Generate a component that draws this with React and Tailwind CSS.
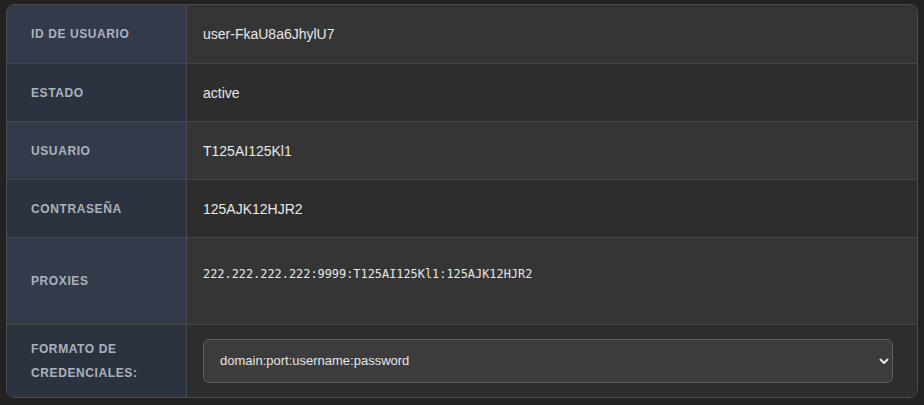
import React from 'react';

const rows = [
	{ label: 'ID de usuario', value: 'user-FkaU8a6JhylU7', h: 'h-[59px]' },
	{ label: 'Estado', value: 'active', h: 'h-[58px]' },
	{ label: 'Usuario', value: 'T125AI125Kl1', h: 'h-[58px]' },
	{ label: 'Contraseña', value: '125AJK12HJR2', h: 'h-[58px]' },
];

const Label = ({ children, odd }) => (
	<div
		className={`flex items-center border-r border-[#454b56] px-6 text-[12px] leading-6 font-bold tracking-[0.05em] text-[#abb2bd] uppercase ${
			odd ? 'bg-[#333b4a]' : 'bg-[#2c3340]'
		}`}
	>
		{children}
	</div>
);

const App = () => {
	return (
		<div className="min-h-screen bg-[#222222] px-1.5 pt-1 font-['Liberation_Sans',Arial,sans-serif]">
			<div className="overflow-hidden rounded-lg border border-[#4b4b4b]">
				{rows.map((row, i) => (
					<div key={row.label} className={`grid grid-cols-[180px_1fr] border-b border-[#464646] ${row.h}`}>
						<Label odd={i % 2 === 0}>{row.label}</Label>
						<div className={`flex items-center px-4 pt-px text-[14px] text-[#e8e8e8] ${i % 2 === 0 ? 'bg-[#353535]' : 'bg-[#2d2d2d]'}`}>
							{row.value}
						</div>
					</div>
				))}

				<div className="grid h-[87px] grid-cols-[180px_1fr] border-b border-[#464646]">
					<Label odd>Proxies</Label>
					<div className="bg-[#353535] px-4 pt-[23px]">
						<code className="font-['DejaVu_Sans_Mono','Liberation_Mono',monospace] text-[11.9px] leading-5 text-[#e8e8e8]">
							222.222.222.222:9999:T125AI125Kl1:125AJK12HJR2
						</code>
					</div>
				</div>

				<div className="grid h-[72px] grid-cols-[180px_1fr]">
					<Label>Formato de credenciales:</Label>
					<div className="bg-[#2d2d2d] pt-[14px] pr-6 pl-4">
						<div className="relative">
							<select
								defaultValue="dpup"
								className="h-[44px] w-full appearance-none rounded-md border border-[#5e5e5e] bg-[#3c3c3c] pl-4 text-[13px] text-[#e6e6e6] outline-none"
							>
								<option value="dpup">domain:port:username:password</option>
								<option value="udpd">username:password@domain:port</option>
							</select>
							<svg
								className="pointer-events-none absolute top-1/2 right-[4px] h-[8px] w-[10px] -translate-y-1/2"
								viewBox="0 0 10 8"
								fill="none"
							>
								<path d="M1.5 2.5 5 6 8.5 2.5" stroke="#e6e6e6" strokeWidth="2" strokeLinecap="round" strokeLinejoin="round" />
							</svg>
						</div>
					</div>
				</div>
			</div>
		</div>
	);
};

export default App;
